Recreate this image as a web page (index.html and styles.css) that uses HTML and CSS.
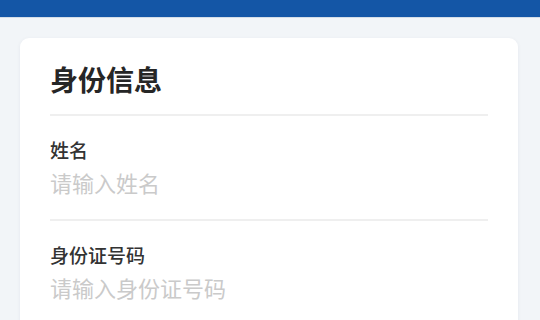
FILE: index.html
```html
<!DOCTYPE html>
<html lang="zh">
<head>
<meta charset="utf-8">
<link rel="stylesheet" href="styles.css">
</head>
<body>
<div class="topbar"></div>
<main class="page">
  <section class="card">
    <h1 class="card-title">身份信息</h1>
    <div class="field">
      <label class="field-label" for="name">姓名</label>
      <input class="field-input" id="name" type="text" placeholder="请输入姓名">
    </div>
    <div class="field">
      <label class="field-label" for="idno">身份证号码</label>
      <input class="field-input" id="idno" type="text" placeholder="请输入身份证号码">
    </div>
  </section>
</main>
</body>
</html>
```

FILE: styles.css
```css
html, body {
  margin: 0;
  padding: 0;
  height: 100%;
  overflow: hidden;
}
body {
  background: #f2f5f8;
  font-family: "Noto Sans CJK SC", "Noto Sans", sans-serif;
}
.topbar {
  height: 17px;
  background: #1456a6;
  border-bottom: 1px solid #d4dde8;
}
.page {
  padding: 20px 22px 0 20px;
}
.card {
  background: #ffffff;
  border-radius: 9px;
  box-shadow: 0 1px 4px rgba(20, 40, 80, 0.06);
  padding: 24px 30px 40px 30px;
}
.card-title {
  margin: 0;
  font-size: 28px;
  line-height: 34px;
  font-weight: 700;
  color: #262626;
  padding-bottom: 18px;
  border-bottom: 2px solid #efefef;
}
.field {
  display: flex;
  flex-direction: column;
  gap: 4px;
  padding: 21px 0 22px 0;
  border-bottom: 2px solid #efefef;
}
.field-label {
  font-size: 19px;
  line-height: 26px;
  font-weight: 500;
  color: #333333;
}
.field-input {
  border: none;
  outline: none;
  padding: 0;
  margin: 0;
  height: 30px;
  font-family: inherit;
  font-size: 22px;
  line-height: 30px;
  color: #333333;
  background: transparent;
}
.field-input::placeholder {
  color: #cacaca;
}
```
